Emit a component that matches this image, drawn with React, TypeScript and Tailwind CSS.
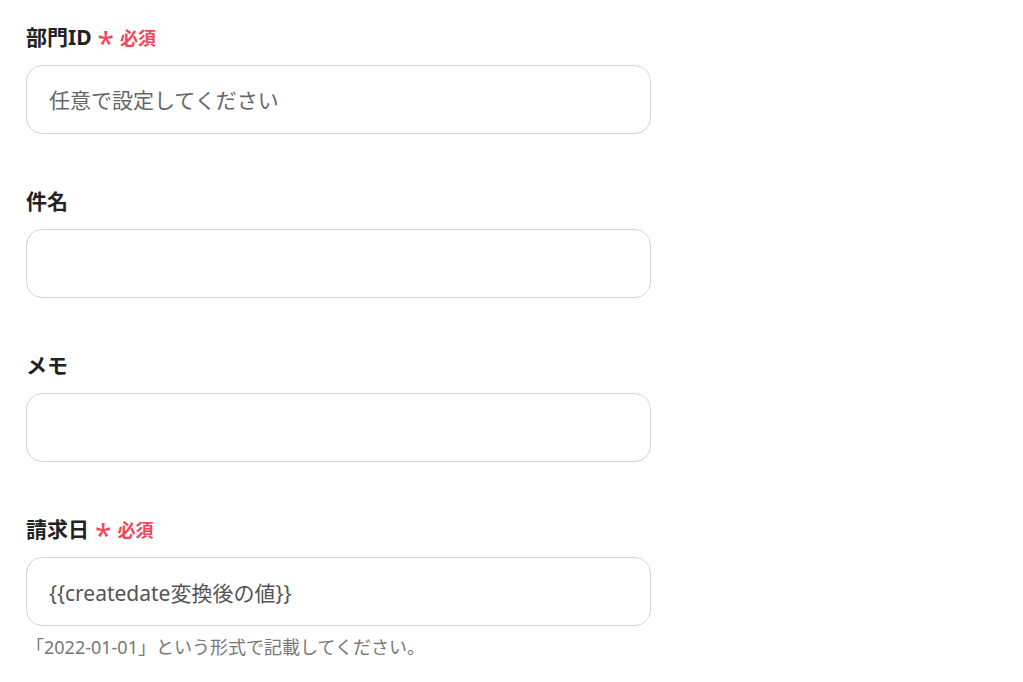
const FONT = "font-['Noto_Sans','Noto_Sans_CJK_JP',sans-serif]";

type Field = {
  label: string;
  required?: boolean;
  value?: string;
  placeholder?: string;
  help?: string;
};

const FIELDS: Field[] = [
  { label: "部門ID", required: true, placeholder: "任意で設定してください" },
  { label: "件名" },
  { label: "メモ" },
  {
    label: "請求日",
    required: true,
    value: "{{createdate変換後の値}}",
    help: "「2022-01-01」という形式で記載してください。",
  },
];

export default function App() {
  return (
    <div className={`min-h-screen bg-white pl-[26px] pt-[26px] ${FONT}`}>
      <div className="flex w-[625px] flex-col gap-[56px]">
        {FIELDS.map((f) => (
          <div key={f.label} className="flex flex-col">
            <div className="flex h-6 items-center">
              <span className="text-[21px] font-bold text-[#222]">{f.label}</span>
              {f.required ? (
                <>
                  <span className="ml-[6px] mt-[10px] text-[30px] font-normal leading-none text-[#f2465c]">
                    *
                  </span>
                  <span className="ml-[6px] text-[18px] font-bold text-[#f2465c]">必須</span>
                </>
              ) : null}
            </div>
            <input
              readOnly
              defaultValue={f.value}
              placeholder={f.placeholder}
              className="mt-[15px] h-[69px] w-full rounded-[16px] border border-[#d2d5da] bg-white px-[22px] text-[21px] text-[#555] outline-none placeholder:text-[#666]"
            />
            {f.help ? (
              <p className="mt-[9px] text-[18px] leading-6 text-[#777]">{f.help}</p>
            ) : null}
          </div>
        ))}
      </div>
    </div>
  );
}
